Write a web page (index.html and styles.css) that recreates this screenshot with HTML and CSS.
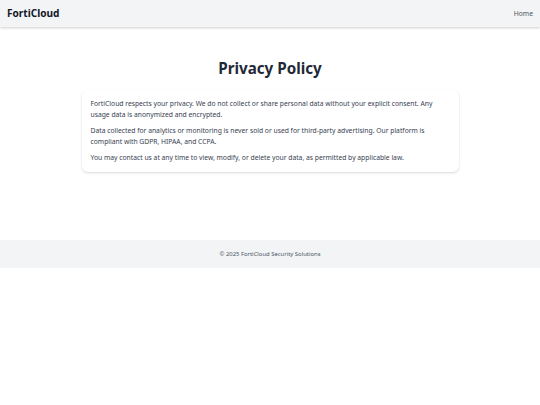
FILE: index.html
```html
<!DOCTYPE html>
<html lang="en">
<head>
<meta charset="utf-8">
<title>Privacy Policy - FortiCloud</title>
<link rel="stylesheet" href="styles.css">
</head>
<body>
<header class="site-header">
  <div class="brand">FortiCloud</div>
  <nav class="nav"><a href="#" class="nav-link">Home</a></nav>
</header>
<main class="main">
  <h1 class="title">Privacy Policy</h1>
  <section class="card">
    <p>FortiCloud respects your privacy. We do not collect or share personal data without your explicit consent. Any usage data is anonymized and encrypted.</p>
    <p>Data collected for analytics or monitoring is never sold or used for third-party advertising. Our platform is compliant with GDPR, HIPAA, and CCPA.</p>
    <p>You may contact us at any time to view, modify, or delete your data, as permitted by applicable law.</p>
  </section>
</main>
<footer class="site-footer">© 2025 FortiCloud Security Solutions</footer>
</body>
</html>
```
FILE: styles.css
```css
* { box-sizing: border-box; }
html, body { margin: 0; padding: 0; background: #ffffff; }
body {
  font-family: "Noto Sans", "Open Sans", sans-serif;
  color: #1f2937;
}
.site-header {
  height: 27px;
  background: #f3f4f6;
  box-shadow: 0 1px 3px rgba(0,0,0,0.12), 0 1px 2px rgba(0,0,0,0.08);
  display: flex;
  align-items: center;
  justify-content: space-between;
  padding: 0 7px;
}
.brand {
  font-weight: 700;
  font-size: 10.1px;
  line-height: 13px;
  color: #111827;
}
.nav {
  display: flex;
  align-items: center;
  font-size: 6.75px;
  line-height: 10px;
}
.nav-link {
  font-size: 6.75px;
  color: #4b5563;
  text-decoration: none;
}
.main {
  padding: 31px 0 68px;
  display: flex;
  flex-direction: column;
  align-items: center;
}
.title {
  margin: 0 0 11px;
  font-size: 15.2px;
  line-height: 21px;
  font-weight: 700;
  color: #1f2937;
}
.card {
  width: 377px;
  background: #fff;
  border-radius: 6px;
  box-shadow: 0 1px 3px rgba(0,0,0,0.10), 0 1px 2px rgba(0,0,0,0.06);
  padding: 8px 9px 9px;
}
.card p {
  margin: 0 0 5px;
  font-size: 6.75px;
  line-height: 11px;
  color: #374151;
}
.card p:last-child { margin-bottom: 0; }
.site-footer {
  height: 28px;
  background: #f3f4f6;
  display: flex;
  align-items: center;
  justify-content: center;
  font-size: 5.9px;
  color: #4b5563;
}
```
